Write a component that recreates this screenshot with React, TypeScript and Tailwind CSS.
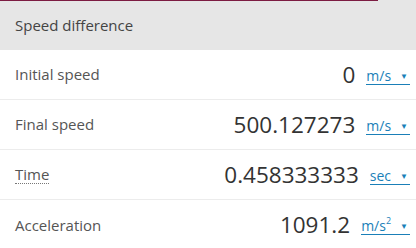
import type { ReactNode } from 'react';

interface Row {
  label: string;
  value: string;
  unit: ReactNode;
  dotted?: boolean;
}

const rows: Row[] = [
  { label: 'Initial speed', value: '0', unit: 'm/s' },
  { label: 'Final speed', value: '500.127273', unit: 'm/s' },
  { label: 'Time', value: '0.458333333', unit: 'sec', dotted: true },
  {
    label: 'Acceleration',
    value: '1091.2',
    unit: (
      <>
        m/s<sup className="text-[9px] -top-[5px]">2</sup>
      </>
    ),
  },
];

export default function App() {
  return (
    <div className="w-[416px] h-[248px] overflow-hidden bg-white font-['Open_Sans',sans-serif]">
      {/* Header */}
      <div className="relative h-[50px] bg-[#e6e6e6] flex items-center px-[15px]">
        <div className="absolute left-0 top-0 h-px w-[378px] bg-[#7c1c42]" />
        <span className="text-[15px] text-[#444]">Speed difference</span>
      </div>

      {/* Rows */}
      {rows.map((row, i) => (
        <div
          key={row.label}
          className={`flex items-center h-[50px] pl-[15px] pr-[6px] ${
            i < rows.length - 1 ? 'border-b border-[#ececec]' : ''
          }`}
        >
          <span
            className={`text-[15px] text-[#555] ${
              row.dotted ? 'border-b border-dotted border-[#777] leading-[18px]' : ''
            }`}
          >
            {row.label}
          </span>
          <span className="ml-auto text-[22.5px] text-[#333]">{row.value}</span>
          <a className="ml-[11px] flex items-center text-[14px] text-[#1a7fb8] border-b border-[#1a7fb8] leading-[17px] mt-[2px]">
            {row.unit}
            <span className="ml-[9px] mr-[2px] text-[8px]">▼</span>
          </a>
        </div>
      ))}
    </div>
  );
}
